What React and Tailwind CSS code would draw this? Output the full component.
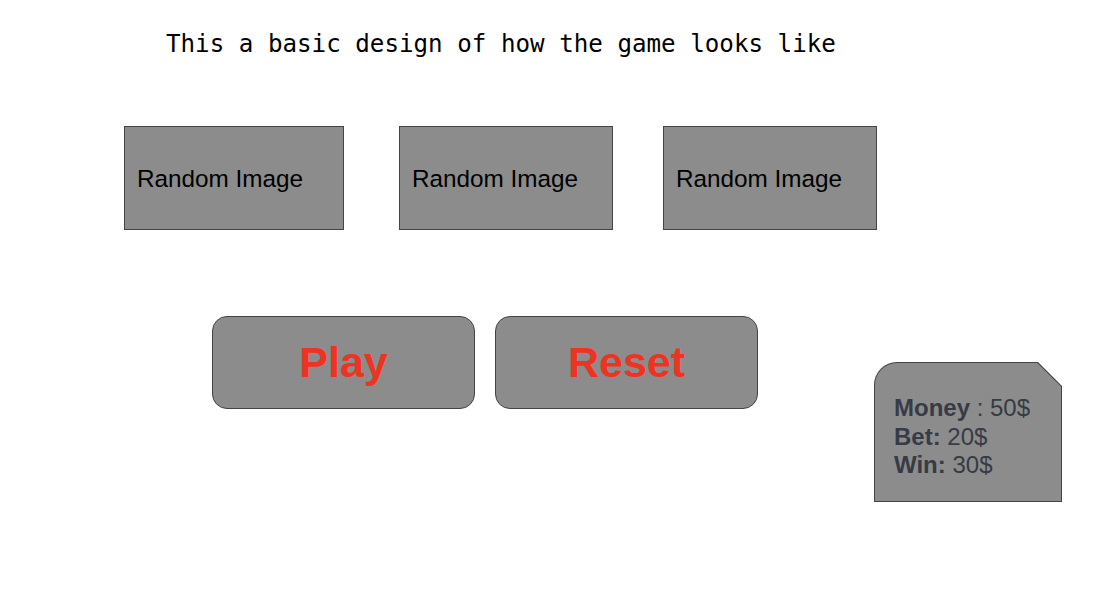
export default function App() {
  const images = [
    { id: 1, w: 'w-[220px]', gap: 'ml-0' },
    { id: 2, w: 'w-[214px]', gap: 'ml-[55px]' },
    { id: 3, w: 'w-[214px]', gap: 'ml-[50px]' },
  ];

  return (
    <div className="w-[1098px] h-[595px] bg-white overflow-hidden font-['Liberation_Sans',Arial,sans-serif]">
      {/* Title */}
      <div className="pt-[28px] pl-[166px] text-[24.2px] leading-[32px] text-black font-['DejaVu_Sans_Mono',monospace] whitespace-pre">
        This a basic design of how the game looks like
      </div>

      {/* Image slots */}
      <div className="flex mt-[66px] pl-[124px]">
        {images.map((img) => (
          <div
            key={img.id}
            className={`${img.w} ${img.gap} h-[104px] border border-[#444] bg-[#8c8c8c] flex items-center pl-3 pt-[2px]`}
          >
            <span className="text-[24.3px] text-black">Random Image</span>
          </div>
        ))}
      </div>

      {/* Buttons + stats */}
      <div className="flex items-start mt-[86px] pl-[212px]">
        <button className="w-[263px] h-[93px] rounded-[15px] border border-[#444] bg-[#8c8c8c] flex items-center justify-center text-[43px] font-bold text-[#ee3322]">
          Play
        </button>
        <button className="ml-5 w-[263px] h-[93px] rounded-[15px] border border-[#444] bg-[#8c8c8c] flex items-center justify-center text-[43px] font-bold text-[#ee3322]">
          Reset
        </button>

        <div className="ml-[116px] mt-[46px] w-[188px] h-[140px] p-px bg-[#444] rounded-tl-[23px] [clip-path:polygon(0_0,calc(100%_-_24px)_0,100%_24px,100%_100%,0_100%)]">
          <div className="w-full h-full bg-[#8c8c8c] rounded-tl-[22px] [clip-path:polygon(0_0,calc(100%_-_23.6px)_0,100%_23.6px,100%_100%,0_100%)] pt-[31px] pl-[19px] text-[24px] leading-[28.5px] text-[#363b45]">
            <div><span className="font-bold">Money</span> : 50$</div>
            <div><span className="font-bold">Bet:</span> 20$</div>
            <div><span className="font-bold">Win:</span> 30$</div>
          </div>
        </div>
      </div>
    </div>
  );
}
